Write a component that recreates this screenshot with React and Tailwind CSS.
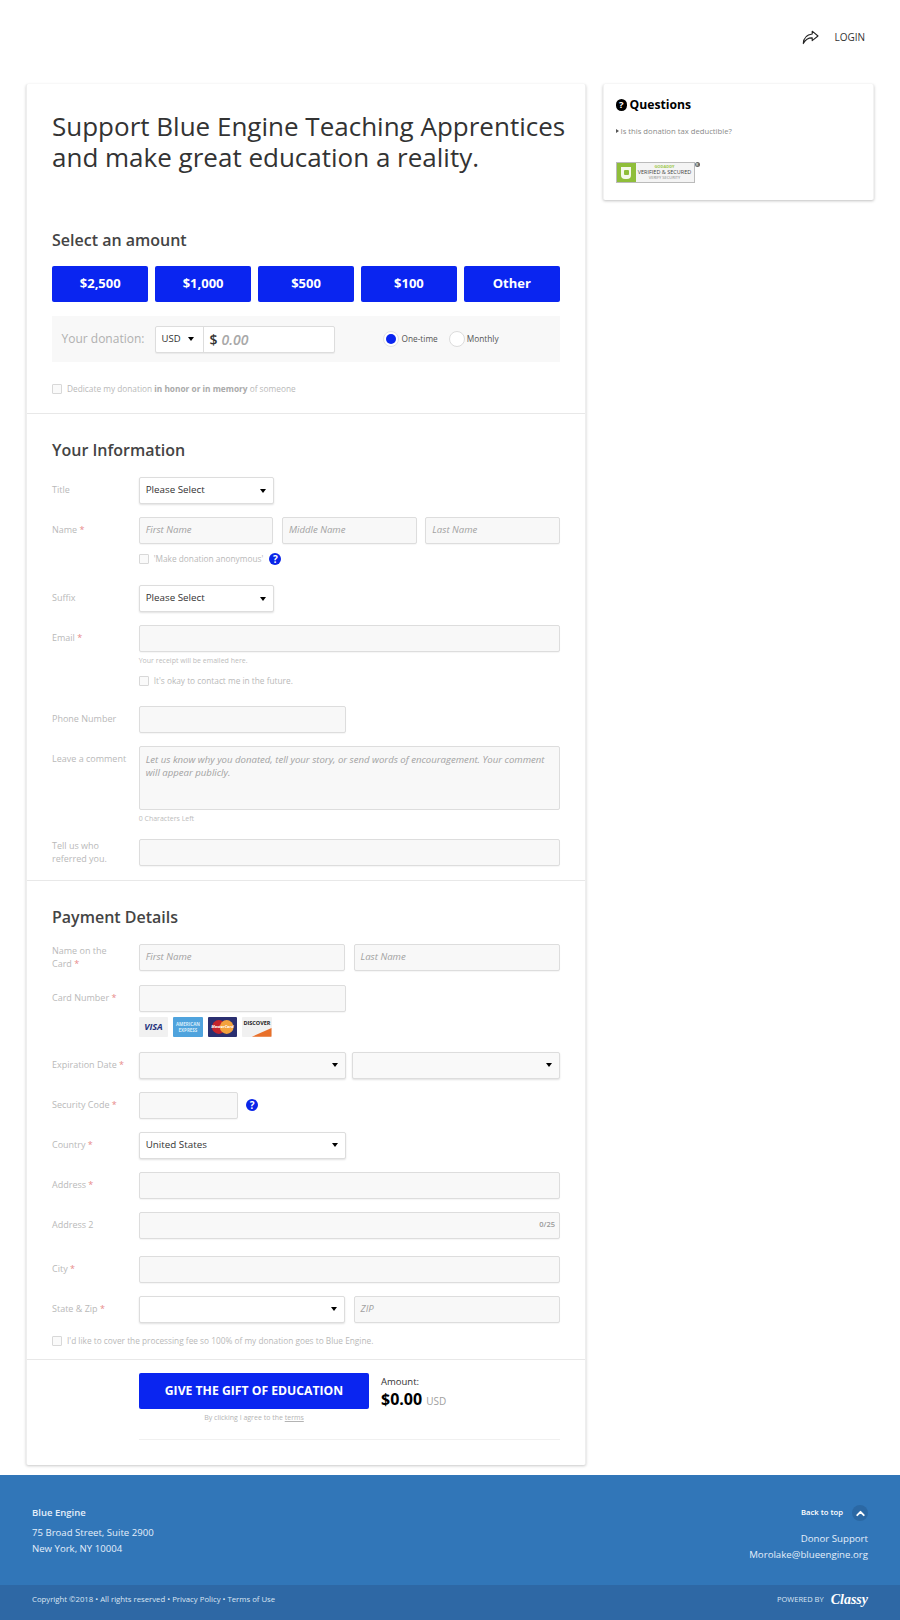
import { ChevronUp } from "lucide-react";

const Caret = () => (
  <span className="w-0 h-0 border-x-[3.5px] border-x-transparent border-t-[4px] border-t-black" />
);

const Help = ({ className }) => (
  <span className={`w-[12px] h-[12px] rounded-full bg-[#0a25e8] text-white text-[10px] font-bold leading-[12px] text-center shrink-0 ${className || ""}`}>?</span>
);

const Label = ({ children, req }) => (
  <div className="w-[86.7px] shrink-0 text-[9px] leading-[12.5px] text-[#b9b9b9] self-center">
    {children}
    {req && <span className="text-[#e88a8a]"> *</span>}
  </div>
);

const Field = ({ children, className }) => (
  <div className={`h-[27px] px-[6px] flex items-center bg-[#f8f8f8] border border-[#dddddd] rounded-[2px] text-[9.6px] italic text-[#a2a2a2] shadow-[0_1px_1px_rgba(0,0,0,0.04)] ${className || "flex-1"}`}>
    {children}
  </div>
);

const Select = ({ children, className, bg }) => (
  <div className={`h-[27px] px-[6px] flex items-center justify-between border border-[#dddddd] rounded-[2px] text-[9.8px] text-[#333] shadow-[0_1px_2px_rgba(0,0,0,0.12)] ${bg || "bg-white"} ${className || "flex-1"}`}>
    <span>{children}</span>
    <span className="flex mr-[1px]"><Caret /></span>
  </div>
);

const Row = ({ label, req, children, className, gap }) => (
  <div className={`flex ${className || "mt-[13px]"}`}>
    <Label req={req}>{label}</Label>
    <div className={`flex-1 flex ${gap || "gap-[8.5px]"}`}>{children}</div>
  </div>
);

const Check = ({ children, className }) => (
  <div className={`flex items-center gap-[5px] text-[8.3px] text-[#b9b9b9] ${className || ""}`}>
    <span className="w-[10px] h-[10px] border border-[#d8d8d8] rounded-[1px] bg-[#fafafa] shrink-0" />
    <span>{children}</span>
  </div>
);

const Amount = ({ children }) => (
  <button className="flex-1 h-[36px] bg-[#0a25f0] rounded-[2px] text-white text-[13px] font-bold">{children}</button>
);

const CardIcons = () => (
  <div className="flex gap-[5px] mt-[4.5px] ml-[86.7px]">
    <div className="w-[29.5px] h-[20px] bg-[#f1f1f1] rounded-[1px] flex items-center justify-center text-[9px] font-bold italic text-[#27337e]">VISA</div>
    <div className="w-[29.5px] h-[20px] bg-[#4fa3dd] rounded-[1px] flex flex-col items-center justify-center text-[4.5px] leading-[6px] font-bold text-[#d6ecfa]">
      <span>AMERICAN</span>
      <span>EXPRESS</span>
    </div>
    <div className="w-[29.5px] h-[20px] bg-[#2a2f70] rounded-[1px] relative overflow-hidden">
      <svg viewBox="0 0 30 20" className="w-full h-full">
        <circle cx="11" cy="10" r="7" fill="#c4232b" />
        <circle cx="19" cy="10" r="7" fill="#f3a23c" />
      </svg>
      <span className="absolute inset-0 text-center text-[4px] leading-[20px] font-bold italic text-white">MasterCard</span>
    </div>
    <div className="w-[29.5px] h-[20px] bg-[#f1f1f1] rounded-[1px] relative overflow-hidden">
      <svg viewBox="0 0 30 20" className="absolute inset-0 w-full h-full">
        <path d="M10 20 L30 11 L30 20 Z" fill="#e8702a" />
      </svg>
      <span className="absolute left-0 right-0 top-[3px] text-center text-[5.5px] leading-[7px] font-bold text-[#222]">DISCOVER</span>
    </div>
  </div>
);

const SectionHead = ({ children, className }) => (
  <h2 className={`text-[16px] leading-[22px] font-semibold text-[#444] ${className || ""}`}>{children}</h2>
);

export default function App() {
  return (
    <div className="w-[900px] h-[1620px] bg-white flex flex-col font-['Open_Sans',sans-serif]">
      <header className="h-[84px] flex justify-end items-start pt-[27px] pr-[35px]">
        <div className="flex items-center gap-[15px] h-[20px] text-[10px] font-medium text-[#333]">
          <svg width="17" height="15" viewBox="0 0 17 15" fill="none" stroke="#222" strokeWidth="1.1" strokeLinejoin="round">
            <path d="M10.2 1.2 L16 6 L10.2 10.6 V7.9 C6.2 7.7 3.6 9.4 1.3 13.6 C1.6 8.2 4.5 4.6 10.2 4 Z" />
          </svg>
          <span>LOGIN</span>
        </div>
      </header>

      <div className="flex items-start gap-[17px] pl-[26px]">
        <main className="w-[560px] h-[1381px] bg-white border-x border-[#eeeeee] rounded-[2px] shadow-[0_1px_3px_rgba(0,0,0,0.22)]">
          <section className="h-[330px] px-[25px] border-b border-[#e8e8e8] flex flex-col">
            <h1 className="mt-[27px] text-[26px] leading-[31px] text-[#333] whitespace-nowrap">
              Support Blue Engine Teaching Apprentices
              <br />
              and make great education a reality.
            </h1>
            <SectionHead className="mt-[56px]">Select an amount</SectionHead>
            <div className="flex gap-[6.5px] mt-[15px]">
              <Amount>$2,500</Amount>
              <Amount>$1,000</Amount>
              <Amount>$500</Amount>
              <Amount>$100</Amount>
              <Amount>Other</Amount>
            </div>
            <div className="h-[46px] shrink-0 mt-[14px] bg-[#f8f8f8] flex items-center pl-[9.5px]">
              <span className="w-[93px] text-[12px] text-[#b0b0b0]">Your donation:</span>
              <div className="w-[180px] h-[27px] flex bg-white border border-[#dddddd] rounded-[2px] shadow-[0_1px_1px_rgba(0,0,0,0.06)]">
                <div className="w-[48px] flex items-center gap-[7px] pl-[6px] border-r border-[#dddddd] text-[9.5px] text-[#333]">
                  USD <Caret />
                </div>
                <div className="flex-1 flex items-center pl-[6px] gap-[4px] text-[14px] font-semibold text-[#333]">
                  $ <span className="italic text-[#a8a8a8]">0.00</span>
                </div>
              </div>
              <div className="flex items-center ml-[48px] text-[8.3px] text-[#555]">
                <span className="w-[16px] h-[16px] rounded-full border border-[#e4e4e4] bg-white flex items-center justify-center">
                  <span className="w-[10px] h-[10px] rounded-full bg-[#0a25f0]" />
                </span>
                <span className="ml-[3px]">One-time</span>
                <span className="w-[16px] h-[16px] ml-[11px] rounded-full border border-[#dcdcdc] bg-white" />
                <span className="ml-[2px]">Monthly</span>
              </div>
            </div>
            <Check className="mt-[21px]">
              Dedicate my donation <b className="font-bold text-[#aaa]">in honor or in memory</b> of someone
            </Check>
          </section>

          <section className="h-[467px] px-[25px] border-b border-[#e8e8e8] flex flex-col">
            <SectionHead className="mt-[25px]">Your Information</SectionHead>
            <Row label="Title" className="mt-[16px]">
              <Select className="w-[135.5px]">Please Select</Select>
            </Row>
            <Row label="Name" req>
              <Field>First Name</Field>
              <Field>Middle Name</Field>
              <Field>Last Name</Field>
            </Row>
            <div className="ml-[86.7px] mt-[10px] h-[10px] flex items-center gap-[6px]">
              <Check>'Make donation anonymous'</Check>
              <Help />
            </div>
            <Row label="Suffix" className="mt-[21px]">
              <Select className="w-[135.5px]">Please Select</Select>
            </Row>
            <Row label="Email" req>
              <Field />
            </Row>
            <div className="ml-[86.7px] mt-[4px] text-[7px] leading-[10px] text-[#bdbdbd]">Your receipt will be emailed here.</div>
            <Check className="ml-[86.7px] mt-[10px] h-[10px]">It's okay to contact me in the future.</Check>
            <Row label="Phone Number" className="mt-[20px]">
              <Field className="w-[207px]" />
            </Row>
            <div className="flex mt-[13px]">
              <div className="w-[86.7px] shrink-0 text-[9px] leading-[12.5px] pt-[7px] text-[#b9b9b9]">Leave a comment</div>
              <div className="flex-1 h-[64px] px-[6px] pt-[6px] bg-[#f8f8f8] border border-[#dddddd] rounded-[2px] text-[9.6px] leading-[13px] italic text-[#a2a2a2]">
                Let us know why you donated, tell your story, or send words of encouragement. Your comment will appear publicly.
              </div>
            </div>
            <div className="ml-[86.7px] mt-[4px] text-[7px] leading-[10px] text-[#bdbdbd]">0 Characters Left</div>
            <Row label={<>Tell us who<br />referred you.</>} className="mt-[15px]">
              <Field />
            </Row>
          </section>

          <section className="px-[25px] flex flex-col h-[479px] border-b border-[#e8e8e8]">
            <SectionHead className="mt-[25px]">Payment Details</SectionHead>
            <Row label={<>Name on the<br />Card</>} req className="mt-[16px]">
              <Field>First Name</Field>
              <Field>Last Name</Field>
            </Row>
            <Row label="Card Number" req className="mt-[14px]">
              <Field className="w-[207px]" />
            </Row>
            <CardIcons />
            <Row label="Expiration Date" req className="mt-[15px]" gap="gap-[6px]">
              <Select bg="bg-[#f9f9f9]" />
              <Select bg="bg-[#f9f9f9]" />
            </Row>
            <Row label="Security Code" req>
              <Field className="w-[99px]" />
              <Help className="mt-[7px]" />
            </Row>
            <Row label="Country" req>
              <Select className="w-[207px]">United States</Select>
            </Row>
            <Row label="Address" req>
              <Field />
            </Row>
            <Row label="Address 2">
              <Field className="flex-1 justify-end not-italic font-semibold !text-[#999] !text-[7.5px] !px-[4px]">0/25</Field>
            </Row>
            <Row label="City" req className="mt-[17px]">
              <Field />
            </Row>
            <Row label="State & Zip" req>
              <Select />
              <Field>ZIP</Field>
            </Row>
            <Check className="mt-[12px]">I'd like to cover the processing fee so 100% of my donation goes to Blue Engine.</Check>
          </section>

          <section className="pl-[112px] pr-[25px] pt-[13px]">
            <div className="flex items-start gap-[12px]">
              <div className="w-[230px]">
                <button className="w-full h-[36px] bg-[#0a25f0] rounded-[2px] text-white text-[12.2px] font-bold">GIVE THE GIFT OF EDUCATION</button>
                <p className="mt-[4px] text-center text-[7px] leading-[10px] text-[#b4b4b4]">
                  By clicking I agree to the <span className="underline">terms</span>
                </p>
              </div>
              <div className="pt-[3px]">
                <p className="text-[9.5px] leading-[12px] text-[#333]">Amount:</p>
                <p className="text-[16px] leading-[22px] font-bold text-black">
                  $0.00 <span className="text-[10px] font-normal text-[#a0a0a0]">USD</span>
                </p>
              </div>
            </div>
            <div className="mt-[16px] border-t border-[#f0f0f0]" />
          </section>
        </main>

        <aside className="w-[271px] h-[116px] bg-white rounded-[2px] border-x border-[#f2f2f2] shadow-[0_1px_3px_rgba(0,0,0,0.25)] pl-[11.5px] pt-[12px]">
          <div className="flex items-center gap-[2.5px] text-[12.2px] leading-[18px] font-bold text-black">
            <span className="w-[11.5px] h-[11.5px] rounded-full bg-black text-white text-[9.5px] leading-[11.5px] text-center">?</span>
            <span>Questions</span>
          </div>
          <div className="mt-[11px] flex items-center gap-[2px] text-[7.7px] leading-[12px] text-[#8a8a8a]">
            <span className="w-0 h-0 border-y-[2.5px] border-y-transparent border-l-[3px] border-l-[#555]" />
            Is this donation tax deductible?
          </div>
          <div className="mt-[25px] flex items-start">
            <div className="w-[79px] h-[21px] flex border border-[#bbbbbb] bg-[#f4f4f4]">
              <div className="w-[19px] bg-[#8fbe3a] flex items-center justify-center">
                <span className="w-[10px] h-[12px] bg-white/90 rounded-b-[4px] flex items-center justify-center">
                  <span className="w-[5px] h-[5px] bg-[#8fbe3a] rounded-[1px]" />
                </span>
              </div>
              <div className="flex-1 flex flex-col items-center justify-center leading-none">
                <span className="text-[4px] font-bold text-[#9cc74a]">GODADDY</span>
                <span className="text-[5.5px] my-[0.5px] text-[#444]">VERIFIED &amp; SECURED</span>
                <span className="text-[4px] text-[#888]">VERIFY SECURITY</span>
              </div>
            </div>
            <span className="w-[5px] h-[5px] rounded-full bg-[#666] text-white text-[4px] leading-[5px] text-center">R</span>
          </div>
        </aside>
      </div>

      <footer className="mt-[10px] flex-1 flex flex-col bg-[#3176b8] text-[#e4eefa]">
        <div className="h-[110px] px-[32px] flex justify-between pt-[30px]">
          <div>
            <p className="text-[9.5px] leading-[16px] font-semibold">Blue Engine</p>
            <p className="mt-[4px] text-[9.6px] leading-[16px]">75 Broad Street, Suite 2900</p>
            <p className="text-[9.6px] leading-[16px]">New York, NY 10004</p>
          </div>
          <div className="flex flex-col items-end">
            <div className="flex items-center gap-[9px] text-[7.7px] font-semibold h-[16px] text-white">
              Back to top
              <span className="w-[16px] h-[16px] rounded-full bg-[#2b68a4] flex items-center justify-center">
                <ChevronUp size={13} strokeWidth={3.5} />
              </span>
            </div>
            <p className="mt-[10px] text-[9.66px] leading-[16px]">Donor Support</p>
            <p className="text-[9.66px] leading-[16px]">Morolake@blueengine.org</p>
          </div>
        </div>
        <div className="flex-1 bg-[#2e68a5] px-[32px] pb-[5px] flex justify-between items-center text-[7.75px] text-[#dbe6f3]">
          <span>Copyright ©2018 • All rights reserved • Privacy Policy • Terms of Use</span>
          <div className="flex items-center gap-[7px]">
            <span className="text-[7.5px]">POWERED BY</span>
            <span className="font-['Liberation_Serif',serif] italic font-bold text-[14px] leading-none text-white">Classy</span>
          </div>
        </div>
      </footer>
    </div>
  );
}
